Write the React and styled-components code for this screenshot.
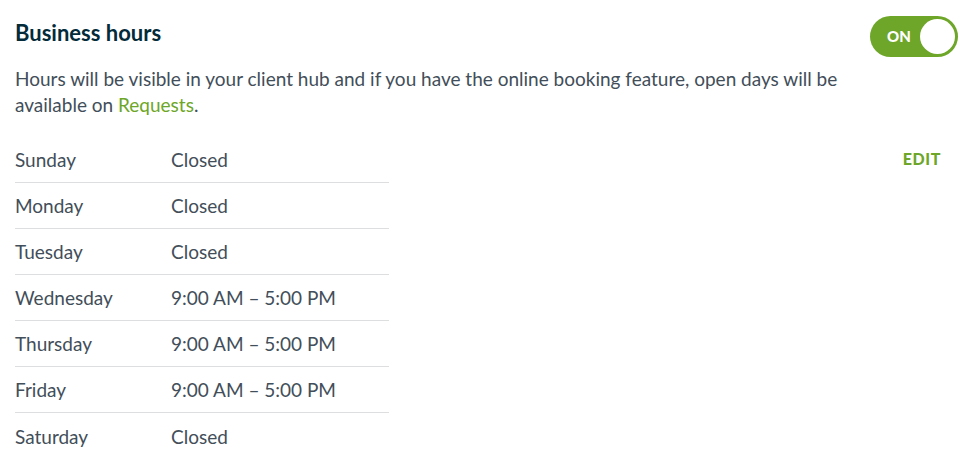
import React, { useState } from 'react';
import styled, { createGlobalStyle } from 'styled-components';

const GlobalStyle = createGlobalStyle`
  body {
    margin: 0;
    background: #fff;
    font-family: "Lato", "Noto Sans", sans-serif;
    color: #424e59;
  }
`

const Page = styled.div`
  padding: 14px 13px 0 15px;
`

const Header = styled.div`
  display: flex;
  align-items: center;
  justify-content: space-between;
  height: 40px;
  margin-top: 2px;
`

const Title = styled.h2`
  margin: -8px 0 0 0;
  font-size: 22px;
  font-weight: 700;
  color: #032b3a;
`

const Toggle = styled.button`
  display: flex;
  align-items: center;
  justify-content: space-between;
  width: 88px; height: 41px;
  padding: 0 3px 0 17px;
  border: none;
  border-radius: 21px;
  background-color: ${(props) => (props.$on ? "#6da628" : "#c9ced2")};
  cursor: pointer;
  box-sizing: border-box;
  span {
    font-family: "Lato", sans-serif;
    font-size: 15px;
    font-weight: 900;
    color: #fff;
  }
  i {
    width: 35px; height: 35px;
    border-radius: 50%;
    background: #fff;
  }
`

const Description = styled.p`
  margin: 10px 0 0 0;
  max-width: 850px;
  font-size: 19px;
  line-height: 26px;
`

const Link = styled.a`
  color: #6da628;
  text-decoration: none;
`

const Body = styled.div`
  display: flex;
  justify-content: space-between;
  align-items: flex-start;
  margin-top: 19px;
`

const Table = styled.div`
  width: 374px;
`

const Row = styled.div`
  display: grid;
  grid-template-columns: 156px 1fr;
  align-items: center;
  height: 46px;
  font-size: 19px;
  border-bottom: ${(props) => (props.$last ? "none" : "1px solid #dcdedf")};
  box-sizing: border-box;
`

const Edit = styled.a`
  margin: 12px 17px 0 0;
  font-size: 16px;
  font-weight: 900;
  color: #6da628;
  letter-spacing: 0.6px;
  cursor: pointer;
`

const hours = [
  ["Sunday", "Closed"],
  ["Monday", "Closed"],
  ["Tuesday", "Closed"],
  ["Wednesday", "9:00 AM – 5:00 PM"],
  ["Thursday", "9:00 AM – 5:00 PM"],
  ["Friday", "9:00 AM – 5:00 PM"],
  ["Saturday", "Closed"],
];

export default function App() {
  const [on, setOn] = useState(true);

  return (
    <Page>
      <GlobalStyle />
      <Header>
        <Title>Business hours</Title>
        <Toggle $on={on} onClick={() => setOn(!on)}>
          <span>{on ? "ON" : "OFF"}</span>
          <i />
        </Toggle>
      </Header>
      <Description>
        Hours will be visible in your client hub and if you have the online booking feature, open days will be available on <Link href="#">Requests</Link>.
      </Description>
      <Body>
        <Table>
          {hours.map(([day, time], i) => (
            <Row key={day} $last={i === hours.length - 1}>
              <div>{day}</div>
              <div>{time}</div>
            </Row>
          ))}
        </Table>
        <Edit>EDIT</Edit>
      </Body>
    </Page>
  )
}
